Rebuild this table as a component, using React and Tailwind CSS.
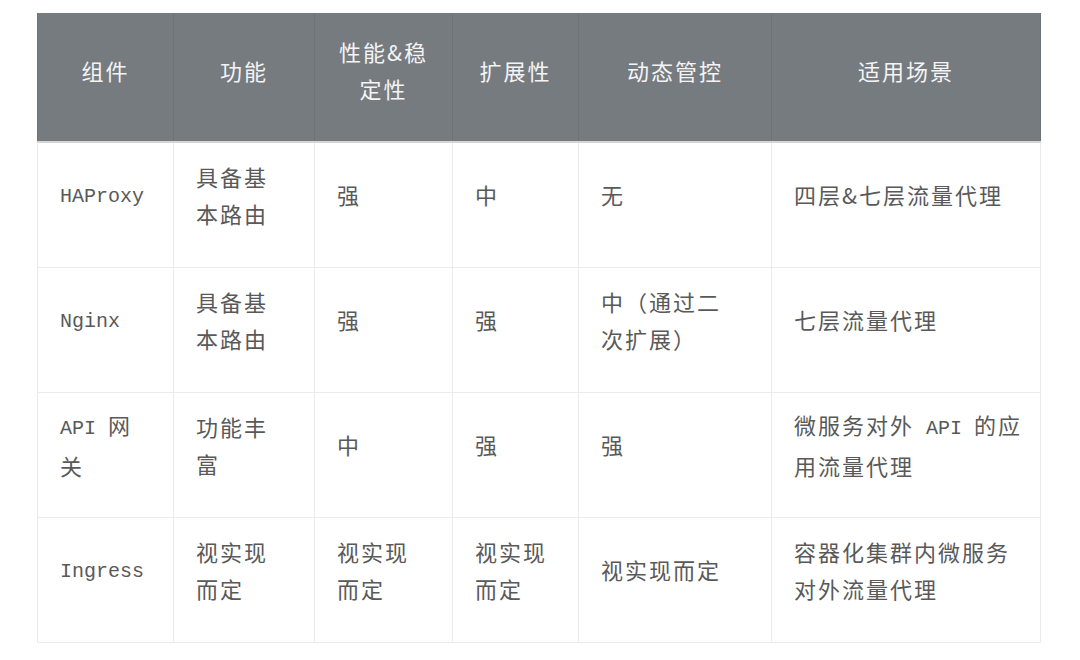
import React from 'react';

const cjk = '"Noto Sans CJK SC", "Liberation Sans", sans-serif';

const Mono = ({ children }) => (
  <span className="text-[20px] tracking-normal" style={{ fontFamily: '"Liberation Mono", monospace' }}>
    {children}
  </span>
);

const headers = [
  ['组件'],
  ['功能'],
  ['性能&稳', '定性'],
  ['扩展性'],
  ['动态管控'],
  ['适用场景'],
];

const rows = [
  [
    [<Mono key="a">HAProxy</Mono>],
    ['具备基', '本路由'],
    ['强'],
    ['中'],
    ['无'],
    ['四层&七层流量代理'],
  ],
  [
    [<Mono key="a">Nginx</Mono>],
    ['具备基', '本路由'],
    ['强'],
    ['强'],
    ['中（通过二', '次扩展）'],
    ['七层流量代理'],
  ],
  [
    [<span key="a"><Mono>API </Mono>网</span>, '关'],
    ['功能丰', '富'],
    ['中'],
    ['强'],
    ['强'],
    [<span key="a">微服务对外<Mono> API </Mono>的应</span>, '用流量代理'],
  ],
  [
    [<Mono key="a">Ingress</Mono>],
    ['视实现', '而定'],
    ['视实现', '而定'],
    ['视实现', '而定'],
    ['视实现而定'],
    ['容器化集群内微服务', '对外流量代理'],
  ],
];

const widths = ['w-[136px]', 'w-[141px]', 'w-[138px]', 'w-[126px]', 'w-[193px]', 'w-[269px]'];

const Lines = ({ lines }) => (
  <>
    {lines.map((l, i) => (
      <div key={i}>{l}</div>
    ))}
  </>
);

export default function App() {
  return (
    <div className="bg-white w-[1080px] h-[660px] pt-[13px] pl-[37px]" style={{ fontFamily: cjk }}>
      <table className="border-collapse table-fixed w-[1003px]">
        <colgroup>
          {widths.map((w, i) => (
            <col key={i} className={w} />
          ))}
        </colgroup>
        <thead>
          <tr className="h-[129px] bg-[#767b80] border-b-2 border-[#d3d5d7]">
            {headers.map((h, i) => (
              <th
                key={i}
                className="border-x border-[#6e7377] align-middle text-center font-normal text-[22px] leading-[37px] tracking-[2px] text-[#f4f4f4] pb-[14px]"
              >
                <Lines lines={h} />
              </th>
            ))}
          </tr>
        </thead>
        <tbody>
          {rows.map((r, ri) => (
            <tr key={ri} className="h-[125px]">
              {r.map((c, ci) => (
                <td
                  key={ci}
                  className="border border-[#ebebeb] align-middle text-left pl-[22px] pr-2 pb-[20px] text-[22px] leading-[37px] tracking-[2px] text-[#595959]"
                >
                  <Lines lines={c} />
                </td>
              ))}
            </tr>
          ))}
        </tbody>
      </table>
    </div>
  );
}
